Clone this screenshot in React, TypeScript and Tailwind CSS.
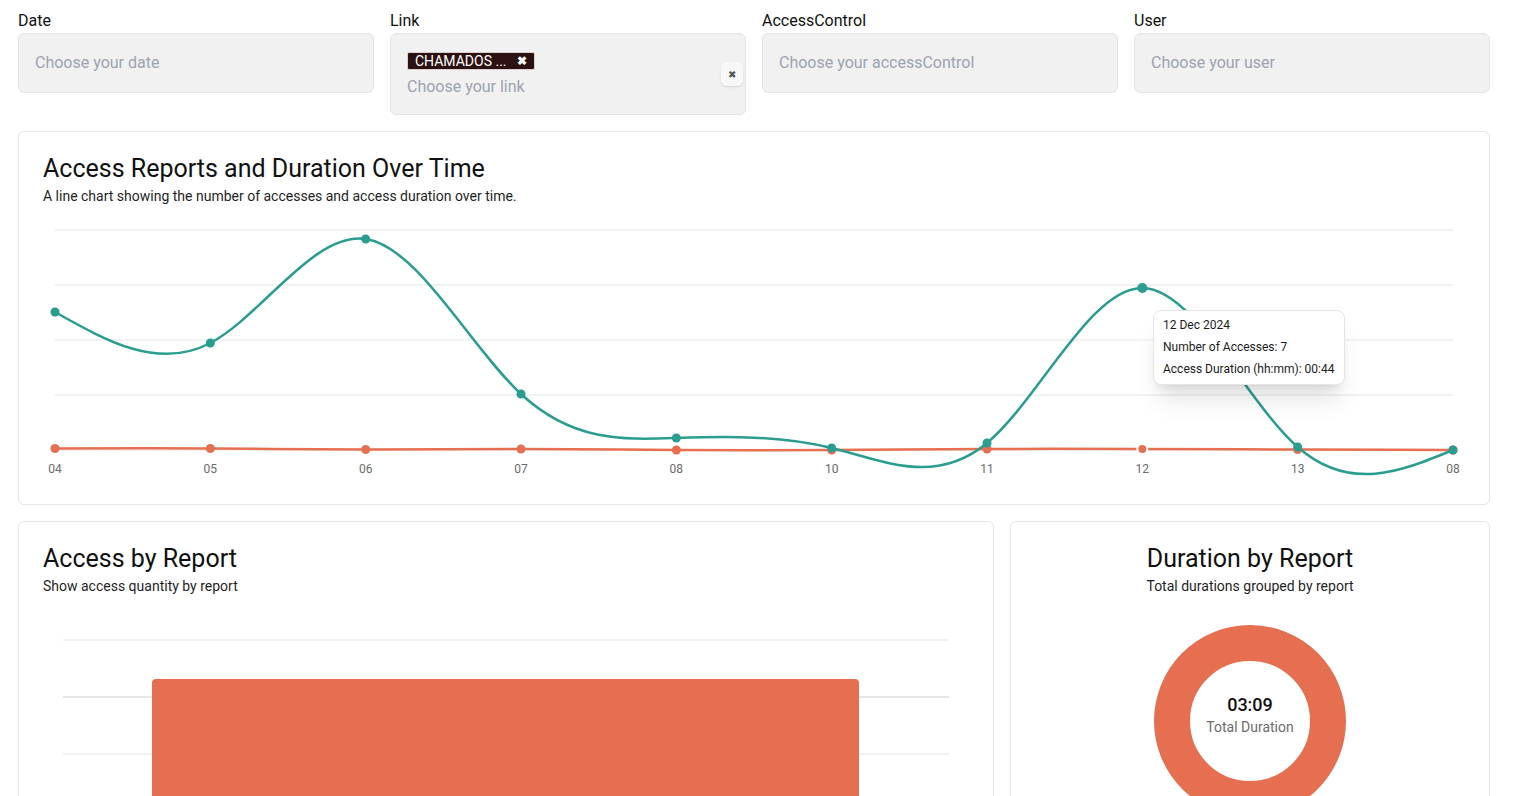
import React from "react";

const TEAL = "#2a9d90";
const ORANGE = "#e76f51";

const labels = ["04", "05", "06", "07", "08", "10", "11", "12", "13", "08"];
const accesses = [82, 113, 9, 164, 208, 218, 213, 58, 217, 220];
const durations = [218.5, 218.5, 219.5, 219, 220, 220, 219, 219, 219.5, 220];

const xs = labels.map((_, i) => 12 + (i * 1398) / 9);

// d3 curveNatural control points
function controlPoints(x: number[]) {
  const n = x.length - 1;
  const a = new Array(n);
  const b = new Array(n);
  const r = new Array(n);
  a[0] = 0;
  b[0] = 2;
  r[0] = x[0] + 2 * x[1];
  for (let i = 1; i < n - 1; ++i) {
    a[i] = 1;
    b[i] = 4;
    r[i] = 4 * x[i] + 2 * x[i + 1];
  }
  a[n - 1] = 2;
  b[n - 1] = 7;
  r[n - 1] = 8 * x[n - 1] + x[n];
  for (let i = 1; i < n; ++i) {
    const m = a[i] / b[i - 1];
    b[i] -= m;
    r[i] -= m * r[i - 1];
  }
  a[n - 1] = r[n - 1] / b[n - 1];
  for (let i = n - 2; i >= 0; --i) a[i] = (r[i] - a[i + 1]) / b[i];
  b[n - 1] = (x[n] + a[n - 1]) / 2;
  for (let i = 0; i < n - 1; ++i) b[i] = 2 * x[i + 1] - a[i + 1];
  return [a, b];
}

function naturalPath(x: number[], y: number[]) {
  const [ax, bx] = controlPoints(x);
  const [ay, by] = controlPoints(y);
  let d = `M${x[0]},${y[0]}`;
  for (let i = 0; i < x.length - 1; i++) {
    d += ` C${ax[i]},${ay[i]} ${bx[i]},${by[i]} ${x[i + 1]},${y[i + 1]}`;
  }
  return d;
}

const FilterLabel = ({ children }: { children: React.ReactNode }) => (
  <label className="block text-[16px] leading-6 text-[#111]">{children}</label>
);

const EmptySelect = ({ placeholder }: { placeholder: string }) => (
  <div className="flex h-[60px] items-center rounded-md border border-[#e4e4e4] bg-[#f1f1f1] pl-4 text-[16px] text-[#9ca3af]">
    {placeholder}
  </div>
);

const Card = ({ className = "", children }: { className?: string; children: React.ReactNode }) => (
  <div className={`rounded-md border border-[#e5e5e5] bg-white ${className}`}>{children}</div>
);

const LineChart = () => (
  <div className="relative h-[250px]">
    <svg width="1422" height="250" className="overflow-visible">
      {[0, 55, 110, 165, 220].map((y) => (
        <line key={y} x1={12} x2={1410} y1={y} y2={y} stroke="#e5e5e5" strokeWidth={1} />
      ))}
      <path d={naturalPath(xs, durations)} fill="none" stroke={ORANGE} strokeWidth={2.5} />
      {xs.map((x, i) =>
        i === 7 ? (
          <circle key={i} cx={x} cy={durations[i]} r={5} fill={ORANGE} stroke="#fff" strokeWidth={2} />
        ) : (
          <circle key={i} cx={x} cy={durations[i]} r={4.5} fill={ORANGE} />
        )
      )}
      <path d={naturalPath(xs, accesses)} fill="none" stroke={TEAL} strokeWidth={2.5} />
      {xs.map((x, i) => (
        <circle key={i} cx={x} cy={accesses[i]} r={i === 7 ? 5 : 4.5} fill={TEAL} />
      ))}
      {xs.map((x, i) => (
        <text key={i} x={x} y={243} textAnchor="middle" fontSize={12} fill="#6b6b6b" fontFamily="Roboto, sans-serif">
          {labels[i]}
        </text>
      ))}
    </svg>
    <div className="absolute left-[1110px] top-[80px] w-[192px] rounded-lg border border-[#e5e5e5] bg-white px-[9px] pb-[4px] pt-[3px] text-[12px] leading-[22px] text-[#1c1c1c] shadow-xl">
      <div>12 Dec 2024</div>
      <div>Number of Accesses: 7</div>
      <div>Access Duration (hh:mm): 00:44</div>
    </div>
  </div>
);

const BarChart = () => (
  <svg width="926" height="280" className="overflow-visible">
    {[20, 77, 134, 191, 248].map((y, i) => (
      <line key={y} x1={20} x2={906} y1={y} y2={y} stroke={i === 1 ? "#cfcfcf" : "#e5e5e5"} strokeWidth={1} />
    ))}
    <path d="M109,280 L109,63 Q109,59 113,59 L812,59 Q816,59 816,63 L816,280 Z" fill={ORANGE} />
  </svg>
);

const Donut = () => (
  <div className="relative mx-auto mt-[5px] h-[192px] w-[192px]">
    <svg width="192" height="192" viewBox="0 0 192 192">
      <circle cx={96} cy={96} r={78} fill="none" stroke={ORANGE} strokeWidth={36} />
    </svg>
    <div className="absolute inset-0 flex flex-col items-center justify-center pb-3">
      <div className="text-[18px] font-medium leading-6 text-[#111]">03:09</div>
      <div className="text-[14px] leading-5 text-[#6b6b6b]">Total Duration</div>
    </div>
  </div>
);

export default function App() {
  return (
    <div className="h-screen overflow-hidden bg-white pl-[18px] pr-[30px] pt-[9px] font-['Roboto',sans-serif] text-[#111]">
      {/* Filters */}
      <div className="grid grid-cols-4 items-start gap-4">
        <div>
          <FilterLabel>Date</FilterLabel>
          <EmptySelect placeholder="Choose your date" />
        </div>
        <div>
          <FilterLabel>Link</FilterLabel>
          <div className="relative h-[82px] rounded-md border border-[#e4e4e4] bg-[#f1f1f1] pl-4 pt-[15px]">
            <span className="inline-flex h-[18px] items-center gap-[10px] rounded-[2px] border border-[#d9cfcf] bg-[#2b1111] px-[7px] text-[14px] leading-none text-white">
              CHAMADOS ...
              <span className="text-[12px] font-bold">✖</span>
            </span>
            <div className="mt-[2px] text-[16px] leading-6 text-[#9ca3af]">Choose your link</div>
            <div className="absolute right-[2px] top-[28px] flex h-6 w-[22px] items-center justify-center rounded-md bg-[#f7f7f7] text-[10px] text-[#555] shadow-sm">
              ✖
            </div>
          </div>
        </div>
        <div>
          <FilterLabel>AccessControl</FilterLabel>
          <EmptySelect placeholder="Choose your accessControl" />
        </div>
        <div>
          <FilterLabel>User</FilterLabel>
          <EmptySelect placeholder="Choose your user" />
        </div>
      </div>

      {/* Line chart */}
      <Card className="mt-4">
        <div className="flex flex-col gap-[5px] p-6">
          <h2 className="mt-px text-[25px] leading-6">Access Reports and Duration Over Time</h2>
          <p className="text-[14px] leading-5 text-[#1f1f1f]">
            A line chart showing the number of accesses and access duration over time.
          </p>
        </div>
        <div className="px-6 pb-6">
          <LineChart />
        </div>
      </Card>

      {/* Bottom cards */}
      <div className="mt-4 grid grid-cols-[1fr_480px] gap-4">
        <Card className="h-[420px]">
          <div className="flex flex-col gap-[5px] p-6">
            <h2 className="mt-px text-[25px] leading-6">Access by Report</h2>
            <p className="text-[14px] leading-5 text-[#1f1f1f]">Show access quantity by report</p>
          </div>
          <div className="px-6">
            <BarChart />
          </div>
        </Card>
        <Card className="h-[420px]">
          <div className="flex flex-col items-center gap-[5px] p-6">
            <h2 className="mt-px text-[25px] leading-6">Duration by Report</h2>
            <p className="text-[14px] leading-5 text-[#1f1f1f]">Total durations grouped by report</p>
          </div>
          <Donut />
        </Card>
      </div>
    </div>
  );
}
